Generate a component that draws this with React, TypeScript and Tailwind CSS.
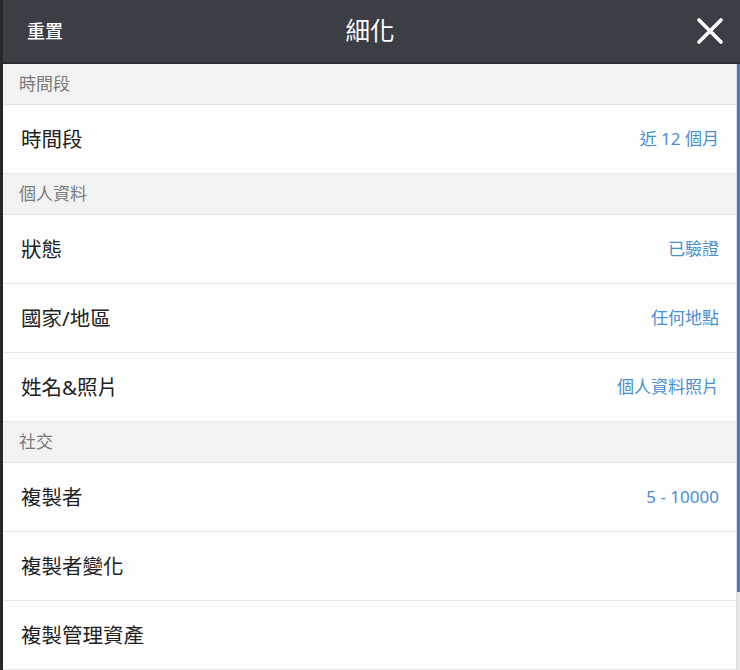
import React from "react";

const font = { fontFamily: '"Noto Sans", "Noto Sans CJK TC", sans-serif' };

function Section({ title }: { title: string }) {
  return (
    <div className="h-[41px] flex items-center pl-[16px] bg-[#f2f2f2] border-b border-[#e3e3e3] text-[17px] text-[#7a7a7a]">
      {title}
    </div>
  );
}

function Row({ label, value }: { label: string; value?: string }) {
  return (
    <div className="h-[69px] flex items-center justify-between pl-[18px] pr-[17px] bg-[#fdfdfd] border-b border-[#e8e8e8]">
      <span className="text-[20.5px] text-[#222]">{label}</span>
      {value && <span className="text-[17px] text-[#4a8fd0]">{value}</span>}
    </div>
  );
}

export default function App() {
  return (
    <div className="w-[740px] h-[670px] overflow-hidden flex flex-col bg-white" style={font}>
      <div className="h-[64px] shrink-0 flex items-center bg-[#3b3e45] border-b-2 border-[#2a2c31] relative">
        <div className="w-[3px] self-stretch bg-[#25272b]" />
        <span className="ml-[24px] text-[18px] text-white font-medium">重置</span>
        <span className="absolute left-1/2 -translate-x-1/2 text-[24.5px] text-white">細化</span>
        <svg className="ml-auto mr-[16px]" width="28" height="28" viewBox="0 0 28 28">
          <path d="M3 3 L25 25 M25 3 L3 25" stroke="white" strokeWidth="3.6" strokeLinecap="round" />
        </svg>
      </div>
      <div className="flex flex-1 min-h-0">
        <div className="w-[3px] bg-[#25272b]" />
        <div className="flex-1 flex flex-col border-r border-[#dcdcdc]">
          <Section title="時間段" />
          <Row label="時間段" value="近 12 個月" />
          <Section title="個人資料" />
          <Row label="狀態" value="已驗證" />
          <Row label="國家/地區" value="任何地點" />
          <Row label="姓名&照片" value="個人資料照片" />
          <Section title="社交" />
          <Row label="複製者" value="5 - 10000" />
          <Row label="複製者變化" />
          <Row label="複製管理資產" />
        </div>
        <div className="w-[3px] flex flex-col bg-[#e6e6e6]">
          <div className="h-[528px] bg-[#3d7fc4]" />
        </div>
      </div>
    </div>
  );
}
